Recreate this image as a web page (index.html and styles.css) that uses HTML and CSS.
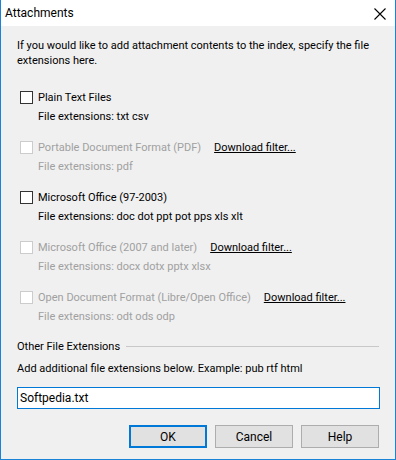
FILE: index.html
```html
<!DOCTYPE html>
<html>
<head>
<meta charset="utf-8">
<link rel="stylesheet" href="styles.css">
</head>
<body>
<div class="window">
  <div class="titlebar">
    <span class="title">Attachments</span>
    <svg class="close" width="12" height="12" viewBox="0 0 12 12"><path d="M0.5 0.5 L11.5 11.5 M11.5 0.5 L0.5 11.5" stroke="#000" stroke-width="1.1" fill="none"/></svg>
  </div>
  <div class="content">
    <p class="intro">If you would like to add attachment contents to the index, specify the file extensions here.</p>

    <div class="group">
      <div class="row"><span class="box"></span><span>Plain Text Files</span></div>
      <div class="ext">File extensions: txt csv</div>
    </div>

    <div class="group disabled">
      <div class="row"><span class="box"></span><span class="label">Portable Document Format (PDF)</span><a class="link">Download filter...</a></div>
      <div class="ext">File extensions: pdf</div>
    </div>

    <div class="group">
      <div class="row"><span class="box"></span><span>Microsoft Office (97-2003)</span></div>
      <div class="ext">File extensions: doc dot ppt pot pps xls xlt</div>
    </div>

    <div class="group disabled">
      <div class="row"><span class="box"></span><span class="label">Microsoft Office (2007 and later)</span><a class="link">Download filter...</a></div>
      <div class="ext">File extensions: docx dotx pptx xlsx</div>
    </div>

    <div class="group disabled">
      <div class="row"><span class="box"></span><span class="label">Open Document Format (Libre/Open Office)</span><a class="link">Download filter...</a></div>
      <div class="ext">File extensions: odt ods odp</div>
    </div>

    <div class="section"><span>Other File Extensions</span><span class="rule"></span></div>
    <div class="hint">Add additional file extensions below. Example: pub rtf html</div>
    <div class="input">Softpedia.txt</div>

    <div class="buttons">
      <div class="btn default">OK</div>
      <div class="btn">Cancel</div>
      <div class="btn">Help</div>
    </div>
  </div>
</div>
</body>
</html>
```

FILE: styles.css
```css
html, body {
  margin: 0;
  padding: 0;
  background: #f0f0f0;
}
body {
  font-family: Roboto, "Noto Sans", sans-serif;
  font-size: 11px;
  color: #000;
}
.window {
  width: 396px;
  height: 460px;
  box-sizing: border-box;
  border: 1px solid #1883d7;
  border-top: none;
  background: #f0f0f0;
  display: flex;
  flex-direction: column;
  overflow: hidden;
}
.titlebar {
  height: 26px;
  background: #fff;
  display: flex;
  align-items: center;
  justify-content: space-between;
  padding: 0 9px 0 4px;
}
.title {
  font-size: 12px;
}
.close {
  display: block;
  margin-top: 1px;
}
.content {
  padding: 12px 16px 0 16px;
  display: flex;
  flex-direction: column;
}
.intro {
  margin: 0;
  line-height: 15px;
}
.group {
  padding-left: 3px;
  margin-top: 16px;
}
.group:first-of-type {
  margin-top: 22px;
}
.row {
  display: flex;
  align-items: center;
  height: 15px;
}
.box {
  width: 11px;
  height: 11px;
  border: 1px solid #333;
  background: #fff;
  margin-right: 5px;
  flex: none;
}
.ext {
  margin-top: 4px;
  padding-left: 18px;
  line-height: 15px;
}
.disabled {
  color: #a0a0a0;
}
.disabled .box {
  border-color: #cccccc;
  background: #fff;
}
.link {
  margin-left: 13px;
  color: #000;
  text-decoration: underline;
}
.section {
  margin-top: 16px;
  display: flex;
  align-items: center;
}
.rule {
  flex: 1;
  height: 1px;
  background: #c8c8c8;
  margin-left: 6px;
  margin-right: 0;
}
.hint {
  margin-top: 8px;
  line-height: 15px;
}
.input {
  margin-top: 11px;
  height: 22px;
  border: 1px solid #0078d7;
  background: #fff;
  box-sizing: border-box;
  width: 363px;
  padding-left: 2px;
  line-height: 20px;
  font-size: 12px;
}
.buttons {
  display: flex;
  justify-content: flex-end;
  gap: 8px;
  margin-top: 16px;
  padding-right: 0;
}
.btn {
  width: 78px;
  height: 23px;
  box-sizing: border-box;
  border: 1px solid #adadad;
  background: #e1e1e1;
  display: flex;
  align-items: center;
  justify-content: center;
  font-size: 12px;
}
.btn.default {
  border: 2px solid #0078d7;
}
```
